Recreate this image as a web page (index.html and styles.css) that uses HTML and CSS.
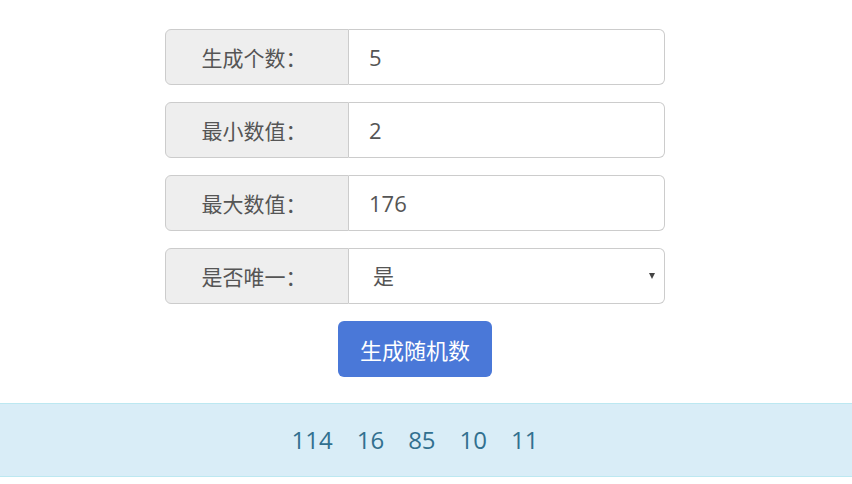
FILE: index.html
```html
<!DOCTYPE html>
<html lang="zh-CN">
<head>
    <meta charset="UTF-8">
    <meta name="viewport" content="width=device-width, initial-scale=1.0">
    <title>随机数生成器</title>
    <link rel="stylesheet" href="styles.css">
</head>
<body>
    <div class="page">
        <form class="form" onsubmit="return false;">
            <div class="input-group">
                <span class="addon">生成个数：</span>
                <input type="text" class="field" value="5">
            </div>
            <div class="input-group">
                <span class="addon">最小数值：</span>
                <input type="text" class="field" value="2">
            </div>
            <div class="input-group">
                <span class="addon">最大数值：</span>
                <input type="text" class="field" value="176">
            </div>
            <div class="input-group">
                <span class="addon">是否唯一：</span>
                <div class="select-wrap">
                    <select class="field select">
                        <option>是</option>
                        <option>否</option>
                    </select>
                </div>
            </div>
            <div class="actions">
                <button type="button" class="btn">生成随机数</button>
            </div>
        </form>
    </div>

    <div class="result">
        <div class="result-inner">
            <span>114</span><span>16</span><span>85</span><span>10</span><span>11</span>
        </div>
    </div>
</body>
</html>
```

FILE: styles.css
```css
body {
    margin: 0;
    font-family: "Open Sans", "Noto Sans CJK SC", sans-serif;
    color: #555;
    background: #fff;
}
.page {
    padding: 29px 22px 0 0;
}
.form {
    width: 500px;
    margin: 0 auto;
}
.input-group {
    display: flex;
    height: 56px;
    margin-bottom: 17px;
}
.addon {
    width: 176px;
    flex: none;
    padding-right: 6px;
    display: flex;
    align-items: center;
    justify-content: center;
    background: #eee;
    border: 1px solid #ccc;
    border-radius: 6px 0 0 6px;
    font-family: "Noto Sans CJK SC", sans-serif;
    font-size: 21px;
    color: #555;
}
.field {
    flex: 1;
    min-width: 0;
    box-sizing: border-box;
    height: 56px;
    margin: 0;
    padding: 0 20px;
    border: 1px solid #ccc;
    border-left: none;
    border-radius: 0 6px 6px 0;
    font-family: "Open Sans", "Noto Sans CJK SC", sans-serif;
    font-size: 22px;
    color: #555;
    background: #fff;
    outline: none;
}
.select-wrap {
    flex: 1;
    display: flex;
    position: relative;
}
.select {
    width: 100%;
    padding-left: 24px;
    font-size: 21px;
    appearance: none;
    -webkit-appearance: none;
}
.select-wrap::after {
    content: "";
    position: absolute;
    right: 10px;
    top: 25px;
    border-left: 3px solid transparent;
    border-right: 3px solid transparent;
    border-top: 6px solid #444;
}
.actions {
    display: flex;
    justify-content: center;
    margin-bottom: 26px;
}
.btn {
    width: 154px;
    height: 56px;
    border: none;
    border-radius: 6px;
    background: #4a78d8;
    color: #fff;
    font-family: "Open Sans", "Noto Sans CJK SC", sans-serif;
    font-size: 22px;
    cursor: pointer;
}
.result {
    background: #d9edf7;
    border-top: 1px solid #bce8f1;
    border-bottom: 1px solid #bce8f1;
    color: #31708f;
}
.result-inner {
    padding: 18px 22px 18px 0;
    display: flex;
    justify-content: center;
    font-size: 24px;
    line-height: 36px;
}
.result-inner span {
    margin: 0 12px;
}
```
